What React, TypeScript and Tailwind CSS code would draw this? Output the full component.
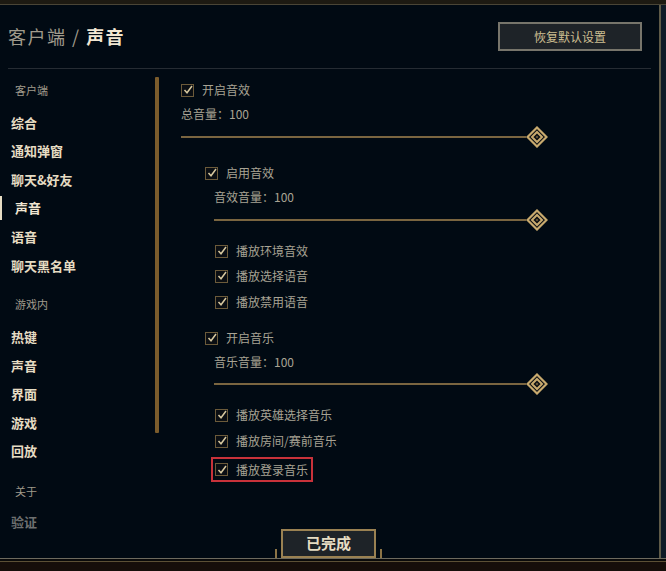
const Check = () => (
  <span className="w-[13px] h-[13px] border border-[#6b5a3a] bg-[#0a0e13] flex items-center justify-center shrink-0">
    <svg width="10" height="10" viewBox="0 0 10 10">
      <path d="M1.5 5 L4 7.8 L9 1" stroke="#d8c9a0" strokeWidth="1.5" fill="none" />
    </svg>
  </span>
);

const Thumb = () => (
  <svg width="22" height="22" viewBox="0 0 22 22" className="shrink-0">
    <polygon points="11,1.5 20.5,11 11,20.5 1.5,11" fill="#0a0e13" stroke="#c8aa6e" strokeWidth="2.2" />
    <polygon points="11,6 16,11 11,16 6,11" fill="#0a0e13" stroke="#c8aa6e" strokeWidth="2" />
    <polygon points="11,9.5 12.5,11 11,12.5 9.5,11" fill="#6b5a3a" />
  </svg>
);

const Slider = ({ indent }: { indent: string }) => (
  <div className={`flex items-center h-[22px] shrink-0 ${indent}`}>
    <div className="flex-1 h-[2px] bg-[#7a6540]" />
    <Thumb />
  </div>
);

const Option = ({ label, className }: { label: string; className: string }) => (
  <div className={`flex items-center h-[24px] shrink-0 gap-[8px] ${className}`}>
    <Check />
    <span>{label}</span>
  </div>
);

const NavLabel = ({ label, className }: { label: string; className: string }) => (
  <div className={`h-[29px] shrink-0 flex items-center pl-[15px] text-[11px] text-[#a09b8c] ${className}`}>{label}</div>
);

const NavItem = ({ label, active, faded }: { label: string; active?: boolean; faded?: boolean }) =>
  active ? (
    <div className="h-[28.6px] shrink-0 flex items-center">
      <div className="w-[2px] h-[24px] bg-[#e6dcc3]" />
      <span className="ml-[13px] text-[13px] font-bold text-[#f0e6d2]">{label}</span>
    </div>
  ) : (
    <div
      className={`h-[28.6px] shrink-0 flex items-center pl-[11px] text-[13px] font-bold ${
        faded ? "text-[#6e7070]" : "text-[#e6dcc3]"
      }`}
    >
      {label}
    </div>
  );

export default function App() {
  return (
    <div className="w-[666px] h-[571px] bg-[#0c1520] overflow-hidden flex flex-col font-['Noto_Sans_CJK_SC',sans-serif]">
      <div className="h-[5px] shrink-0 bg-[#1d1a12] border-b border-[#4a4536]" />
      <div className="flex shrink-0">
        <div className="w-[661px] h-[553px] bg-[#010a13] border-r-2 border-[#5f5b48] flex flex-col">
          {/* header */}
          <div className="h-[63px] shrink-0 flex items-center justify-between pl-[8px] pr-[17px]">
            <div className="text-[18px] text-[#a09b8c] tracking-[1.5px]">
              客户端 / <span className="font-bold text-[#f0e6d2]">声音</span>
            </div>
            <div className="w-[144px] h-[29px] bg-[#1e2328] border-2 border-[#77756b] flex items-center justify-center text-[12px] text-[#cdbe91]">
              恢复默认设置
            </div>
          </div>
          <div className="h-px shrink-0 mx-[8px] bg-[#262c33]" />

          {/* body */}
          <div className="flex h-[460px] shrink-0">
            <div className="w-[155px] flex flex-col pt-[7px]">
              <NavLabel label="客户端" className="mb-[3px]" />
              <NavItem label="综合" />
              <NavItem label="通知弹窗" />
              <NavItem label="聊天&好友" />
              <NavItem label="声音" active />
              <NavItem label="语音" />
              <NavItem label="聊天黑名单" />
              <NavLabel label="游戏内" className="mt-[10px] mb-[4px]" />
              <NavItem label="热键" />
              <NavItem label="声音" />
              <NavItem label="界面" />
              <NavItem label="游戏" />
              <NavItem label="回放" />
              <NavLabel label="关于" className="mt-[11px] mb-[2px]" />
              <NavItem label="验证" faded />
            </div>
            <div className="w-[4px] h-[356px] mt-[8px] bg-[#7b5c2c] rounded-[1px]" />
            <div className="ml-[22px] w-[367px] flex flex-col text-[12px] text-[#a8a394]">
              <Option label="开启音效" className="mt-[9px]" />
              <div className="h-[24px] shrink-0 flex items-center">总音量：100</div>
              <Slider indent="" />
              <Option label="启用音效" className="mt-[13px] pl-[24px]" />
              <div className="h-[24px] shrink-0 flex items-center pl-[33px]">音效音量：100</div>
              <Slider indent="pl-[33px]" />
              <Option label="播放环境音效" className="mt-[8px] pl-[34px]" />
              <Option label="播放选择语音" className="mt-[1px] pl-[34px]" />
              <Option label="播放禁用语音" className="mt-[2px] pl-[34px]" />
              <Option label="开启音乐" className="mt-[12px] pl-[24px]" />
              <div className="h-[23px] shrink-0 flex items-center pl-[33px]">音乐音量：100</div>
              <Slider indent="pl-[33px]" />
              <Option label="播放英雄选择音乐" className="mt-[8px] pl-[34px]" />
              <Option label="播放房间/赛前音乐" className="mt-[2px] pl-[34px]" />
              <div className="mt-[4px] pl-[30px] shrink-0">
                <div className="w-[102px] h-[25px] border-2 border-[#c8323a] flex items-center gap-[8px] pl-[2px]">
                  <Check />
                  <span>播放登录音乐</span>
                </div>
              </div>
            </div>
          </div>

          {/* footer */}
          <div className="h-[29px] shrink-0 flex items-end pl-[275px]">
            <div className="w-[2px] h-[9px] bg-[#8c7446]" />
            <div className="ml-[4px] w-[95px] h-[29px] bg-[#1e2328] border-2 border-[#9a8152] flex items-center justify-center text-[15px] font-bold text-[#e6dcc3]">
              已完成
            </div>
            <div className="ml-[4px] w-[2px] h-[9px] bg-[#8c7446]" />
          </div>
        </div>
        <div className="flex-1 bg-[#0f1a27]" />
      </div>
      <div className="h-[1px] shrink-0 bg-[#6d6a5e]" />
      <div className="h-[2px] shrink-0 bg-[#0a0a0a]" />
      <div className="h-[1px] shrink-0 bg-[#5c5035]" />
      <div className="flex-1 bg-[#160e0a]" />
    </div>
  );
}
